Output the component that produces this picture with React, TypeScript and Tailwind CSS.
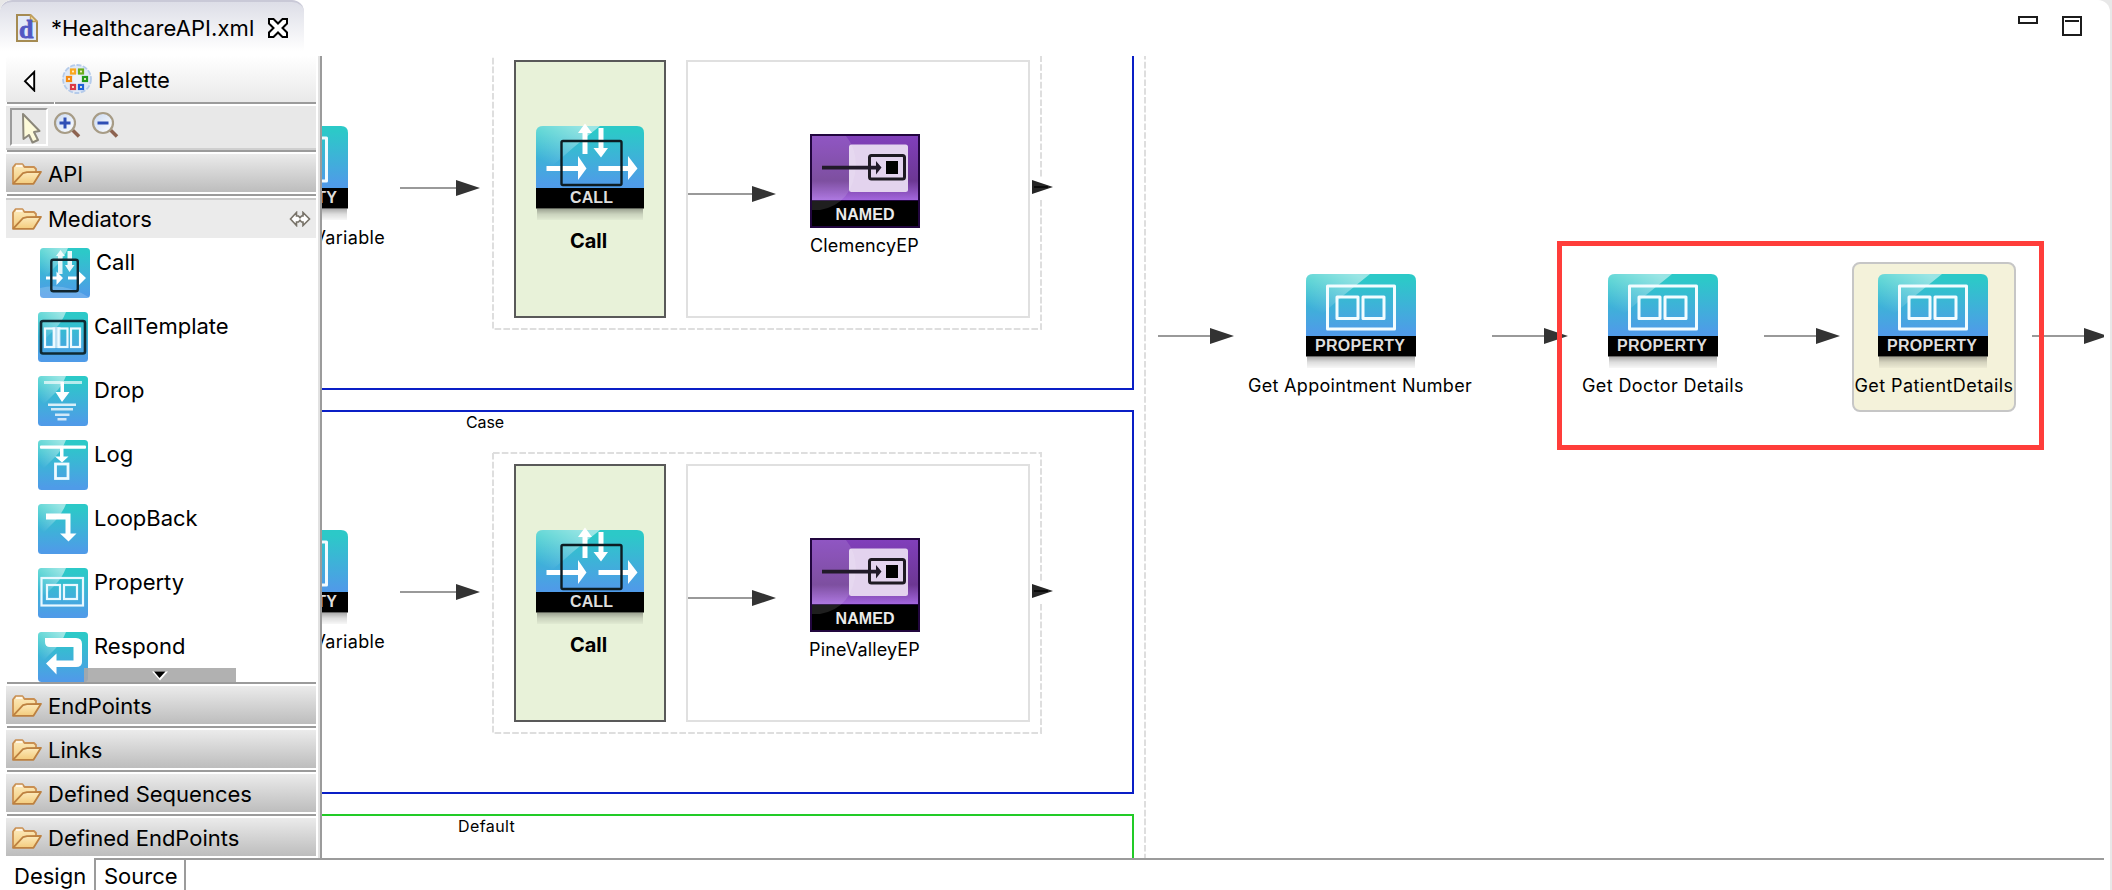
import type { ReactNode } from "react";

/* ---------- shared drawing pieces ---------- */

function Defs() {
  return (
    <svg width="0" height="0" className="absolute">
      <defs>
        <linearGradient id="teal" x1="0" y1="0" x2="0" y2="1">
          <stop offset="0.08" stopColor="#2cc9c8" />
          <stop offset="0.95" stopColor="#4f9be8" />
        </linearGradient>
        <linearGradient id="gloss" x1="0.1" y1="0.9" x2="0.75" y2="0">
          <stop offset="0.1" stopColor="#fff" stopOpacity="0" />
          <stop offset="1" stopColor="#fff" stopOpacity="0.52" />
        </linearGradient>
        <linearGradient id="shade" x1="0" y1="0" x2="0" y2="1">
          <stop offset="0" stopColor="#000" stopOpacity="0.34" />
          <stop offset="0.5" stopColor="#000" stopOpacity="0.13" />
          <stop offset="1" stopColor="#000" stopOpacity="0.03" />
        </linearGradient>
        <linearGradient id="violet" x1="0" y1="0" x2="0" y2="1">
          <stop offset="0" stopColor="#813fbb" />
          <stop offset="0.7" stopColor="#6c3793" />
          <stop offset="1" stopColor="#a366dd" />
        </linearGradient>
        <linearGradient id="folderFill" x1="0" y1="0" x2="0" y2="1">
          <stop offset="0" stopColor="#fdebbd" />
          <stop offset="1" stopColor="#f3cb7c" />
        </linearGradient>
        <linearGradient id="lens" x1="0" y1="0" x2="1" y2="1">
          <stop offset="0" stopColor="#c9d9f2" />
          <stop offset="1" stopColor="#ffffff" />
        </linearGradient>
      </defs>
    </svg>
  );
}

function Badge({ width, label, textX, textW, children }: { width: number; label: string; textX: number; textW: number; children: ReactNode }) {
  return (
    <svg width={width} height="98" viewBox={`0 -4 ${width} 98`} className="block">
      <path d={`M0 62V7Q0 0 7 0H${width - 7}Q${width} 0 ${width} 7V62Z`} fill="url(#teal)" />
      <path d="M0 46V7Q0 0 7 0H64L38 21Q20 37 8 46Z" fill="url(#gloss)" />
      <rect y="62" width={width} height="20.5" fill="#000" />
      <rect y="82.5" x="1" width={width - 2} height="11.5" fill="url(#shade)" />
      {children}
      <text x={textX} y="76.8" textLength={textW} fontSize="16" fontWeight="700" fill="#dedede" fontFamily="Liberation Sans, sans-serif">
        {label}
      </text>
    </svg>
  );
}

function PropertyIcon() {
  return (
    <Badge width={110} label="PROPERTY" textX={9} textW={90}>
      <g fill="none" stroke="#f2fcff" strokeWidth="3" strokeLinejoin="round">
        <rect x="21.5" y="12" width="67" height="43" />
        <rect x="31" y="23" width="21" height="21.5" />
        <rect x="57" y="23" width="21" height="21.5" />
      </g>
    </Badge>
  );
}

function CallIcon() {
  return (
    <Badge width={108} label="CALL" textX={34} textW={43}>
      <g fill="#fff">
        <path d="M46.5 28V7H42L49 -2.5L56 7H51.5V28Z" />
        <path d="M62.5 2H67.5V22H72L65 31.5L57.500 22H62.5Z" />
        <path d="M10.500 40H42V30L50.500 42.500L42 54V45H10.500Z" />
        <path d="M62.500 40H92V30L101.500 42.500L92 54V45H62.500Z" />
      </g>
      <rect x="25.500" y="15" width="60" height="44" rx="1.500" fill="none" stroke="#0d1c22" strokeWidth="2.4" />
    </Badge>
  );
}

function NamedIcon() {
  return (
    <svg width="110" height="94" viewBox="0 0 110 94" className="block">
      <rect width="110" height="94" fill="#22063f" />
      <rect x="2" y="2" width="106" height="64" fill="url(#violet)" />
      <rect x="2" y="67" width="106" height="25" fill="#000" />
      <rect x="39" y="10.500" width="59" height="47.500" rx="2.500" fill="#e3d3ee" />
      <path d="M2 2H36Q46 14 46 32Q43 70 10 76H2Z" fill="#fff" opacity="0.12" />
      <rect x="59.500" y="21.500" width="35" height="23.500" rx="2" fill="none" stroke="#1e1a22" strokeWidth="3" />
      <rect x="76" y="27" width="12" height="13" fill="#000" />
      <path d="M12 31.800H66V27L71.500 33.500L66 40.500V35.500H12Z" fill="#211a29" />
      <text x="25.500" y="85.500" textLength="59" fontSize="16" fontWeight="700" fill="#ebebeb" fontFamily="Liberation Sans, sans-serif">
        NAMED
      </text>
    </svg>
  );
}

function Arrow({ length }: { length: number }) {
  return (
    <svg width={length} height="16" viewBox={`0 0 ${length} 16`} className="block">
      <rect y="7" width={length - 24} height="2" fill="#999" />
      <path d={`M${length - 24} 0L${length} 8L${length - 24} 16Z`} fill="#333" />
    </svg>
  );
}

function StubArrow() {
  return (
    <svg width="22" height="14" viewBox="0 0 22 14" className="block">
      <path d="M0 0L21 7L0 14Z" fill="#262626" />
      <rect x="2" y="6.300" width="14" height="1.400" fill="#000" />
    </svg>
  );
}

/* ---------- palette ---------- */

function FolderIcon() {
  return (
    <svg width="30" height="22" viewBox="0 0 30 22" className="mt-[2px] block flex-none">
      <path d="M1 20.500V4.500L3.500 1.200H10.500L12.500 4H22L24 6V10" fill="url(#folderFill)" stroke="#c98f52" strokeWidth="1.800" strokeLinejoin="round" />
      <path d="M4 1.800H10.500V4H4Z" fill="#fff6e6" />
      <path d="M1 20.800L11 10.200L15 9.200L29 8.800L21.500 20.800Z" fill="url(#folderFill)" stroke="#bd8140" strokeWidth="1.800" strokeLinejoin="round" />
    </svg>
  );
}

function Drawer({ label }: { label: string }) {
  return (
    <div className="flex h-[44px] flex-none flex-col">
      <div className="flex h-[38px] items-center gap-[6px] bg-linear-to-b from-[#ebebeb] to-[#bdbdbd] pl-[6px]">
        <FolderIcon />
        <span className="pt-[2px]">{label}</span>
      </div>
      <div className="mt-[2px] ml-px h-[2px] bg-[#9b9b9b]" />
    </div>
  );
}

function Tile({ children }: { children: ReactNode }) {
  return (
    <svg width="50" height="50" viewBox="0 0 50 50" className="block flex-none">
      <rect width="50" height="50" rx="3.500" fill="url(#teal)" />
      <path d="M0 34V3Q0 0 3 0H28Q24 10 17 17Q9 25 0 34Z" fill="url(#gloss)" />
      {children}
    </svg>
  );
}

const tools: { label: string; icon: ReactNode }[] = [
  {
    label: "CallTemplate",
    icon: (
      <>
        <rect x="14.500" y="15" width="8" height="21" fill="#b9def3" />
        <g fill="none" stroke="#eefaff" strokeWidth="2.200">
          <rect x="7" y="16.500" width="9" height="18.500" />
          <rect x="20.500" y="16.500" width="9" height="18.500" />
          <rect x="33" y="16.500" width="9" height="18.500" />
        </g>
        <rect x="3" y="9" width="44" height="32.500" rx="2" fill="none" stroke="#0f2a33" strokeWidth="2.600" />
      </>
    ),
  },
  {
    label: "Drop",
    icon: (
      <g fill="#fff">
        <rect x="6" y="5" width="38" height="3" opacity="0.65" />
        <path d="M22.500 6H26V16H31.500L24 26L17.500 16H22.500Z" />
        <rect x="10" y="27.500" width="28" height="2.500" opacity="0.8" />
        <rect x="13" y="32" width="22" height="2.500" opacity="0.75" />
        <rect x="17" y="37.500" width="14.500" height="2.500" opacity="0.75" />
        <rect x="19.500" y="42" width="9" height="2.500" opacity="0.75" />
      </g>
    ),
  },
  {
    label: "Log",
    icon: (
      <>
        <rect x="2" y="5.500" width="46" height="3.200" rx="1" fill="#fff" />
        <path d="M22 8H25.500V16.500H30.500L24 22.500L17 16.500H22Z" fill="#fff" />
        <rect x="17.500" y="24" width="12.500" height="14.500" fill="none" stroke="#eefaff" strokeWidth="2.800" />
      </>
    ),
  },
  {
    label: "LoopBack",
    icon: <path d="M8 9.500H32.500V29.500H38.500L30.500 37.500L22 29.500H27.500V15.500H8Z" fill="#fff" />,
  },
  {
    label: "Property",
    icon: (
      <g fill="none" stroke="#e8f8ff" strokeWidth="2.200">
        <rect x="3.500" y="10" width="41.500" height="27.500" />
        <rect x="9" y="17" width="13" height="14" />
        <rect x="26" y="17" width="13" height="14" />
      </g>
    ),
  },
  {
    label: "Respond",
    icon: <path d="M7 6H38Q44 6 44 12V30Q44 35 38 35H18.500V42.500L8 31.500L18.500 21.500V28.500H35.500V15H12Q7 15 7 10Z" fill="#fff" />,
  },
];

function Palette() {
  return (
    <aside className="flex h-[802px] w-[322px] flex-none border-r-2 border-[#9b9b9b] bg-white pl-[6px]">
      <div className="flex w-[310px] flex-none flex-col">
        <header className="flex h-[46px] flex-none items-center bg-linear-to-b from-white to-[#e9e9e9]">
          <svg width="14" height="22" viewBox="0 0 14 22" className="mt-[3px] ml-[17px] block">
            <path d="M11.200 2V20.500L2 11.200Z" fill="#fff" stroke="#000" strokeWidth="1.900" />
          </svg>
          <svg width="30" height="30" viewBox="0 0 30 30" className="ml-[25px] block">
            <circle cx="15" cy="15" r="14" fill="#dfe9f7" stroke="#b5cbea" strokeWidth="1.800" strokeDasharray="5 1.500" />
            <circle cx="15" cy="15" r="5" fill="#edf3fb" />
            <g strokeWidth="2.200" fill="#fff6d8">
              <rect x="9" y="5.500" width="4" height="4" stroke="#f9a71e" />
              <rect x="17" y="5.500" width="4" height="4" stroke="#6aad1c" />
              <rect x="5" y="13" width="4" height="4" stroke="#f58a12" />
              <rect x="21" y="13" width="4" height="4" stroke="#239a1c" />
              <rect x="9" y="21" width="4" height="4" stroke="#da3a48" />
              <rect x="17" y="21" width="4" height="4" stroke="#1f62d8" />
            </g>
          </svg>
          <span className="ml-[6px] pt-[2px] tracking-[0.15px]">Palette</span>
        </header>
        <div className="ml-px flex h-[2px] flex-none gap-px bg-white">
          <div className="w-[47px] bg-[#9b9b9b]" />
          <div className="flex-1 bg-[#9b9b9b]" />
        </div>
        <div className="mt-[2px] flex h-[44px] flex-none items-start border-b-2 border-[#cfcfcf] bg-[#e8e8e8] pt-[2px] pl-[4px]">
          <div className="h-[38px] w-[38px] border-2 border-t-[#9b9b9b] border-r-white border-b-white border-l-[#9b9b9b]">
            <svg width="34" height="34" viewBox="0 0 34 34" className="block">
              <path d="M11 4L27.500 21L22 22L26 30L20.500 32.500L17 25L11.500 29Z" fill="#fdfad9" stroke="#8b877a" strokeWidth="2" strokeLinejoin="round" />
            </svg>
          </div>
          <ZoomGlyph plus />
          <ZoomGlyph />
        </div>
        <div className="ml-px h-[2px] flex-none bg-[#9b9b9b]" />
        <div className="mt-[2px]">
          <Drawer label="API" />
        </div>
        <div className="flex h-[40px] flex-none items-center gap-[6px] border-t-2 border-[#cbcbcb] bg-[#ebebeb] pb-[3px] pl-[6px]">
          <FolderIcon />
          <span className="pt-[2px]">Mediators</span>
          <svg width="22" height="16" viewBox="0 0 22 16" className="mt-[3px] mr-[5px] ml-auto block">
            <path d="M1.500 8L7.500 1.500V5H9.500L11 6.800L12.500 5H14V1.500L20.500 8L14 14.500V11H12.500L11 9.300L9.500 11H7.500V14.500Z" fill="#fff" stroke="#777268" strokeWidth="1.600" />
          </svg>
        </div>
        <div className="relative h-[444px] flex-none overflow-hidden pt-[10px]">
          <div className="flex flex-col gap-[14px] pl-[32px]">
            <div className="flex h-[50px] flex-none gap-[6px] pl-[2px]">
              <Tile>
                <path d="M0 40Q25 34 50 50H0Z" fill="#fff" opacity="0.18" />
                <g fill="#fff">
                  <path d="M18 26V8H16L20.500 2L25 8H22.500V26Z" opacity="0.85" />
                  <path d="M27.500 3H32V17H34.500L29.500 24L25 17H27.500Z" opacity="0.9" />
                  <path d="M6 28.500H16.500V23.500L23 30L16.500 37V31.500H6Z" />
                  <path d="M28 28.500H39V23.500L46 30L39 37V31.500H28Z" />
                </g>
                <rect x="11.300" y="11.800" width="26.500" height="31.500" rx="2" fill="none" stroke="#10252e" strokeWidth="2.400" />
              </Tile>
              <span className="leading-[28px]">Call</span>
            </div>
            {tools.map((t) => (
              <div key={t.label} className="flex h-[50px] flex-none gap-[6px]">
                <Tile>{t.icon}</Tile>
                <span className="leading-[28px]">{t.label}</span>
              </div>
            ))}
          </div>
          <div className="absolute bottom-0 left-[78px] flex h-[14px] w-[152px] justify-center bg-[#a8a8a8]/90">
            <svg width="16" height="10" viewBox="0 0 16 10" className="mt-[3px] block">
              <path d="M0 0.500H16L8 9.500Z" fill="#fff" />
              <path d="M2 0.500H13.500L7.500 7Z" fill="#000" />
            </svg>
          </div>
        </div>
        <div className="ml-px h-[2px] flex-none bg-[#9b9b9b]" />
        <div className="mt-[2px] flex h-[170px] flex-none flex-col overflow-hidden">
          <Drawer label="EndPoints" />
          <Drawer label="Links" />
          <Drawer label="Defined Sequences" />
          <Drawer label="Defined EndPoints" />
        </div>
      </div>
      <div className="ml-[2px] w-[2px] bg-[#e2e2e2]" />
    </aside>
  );
}

function ZoomGlyph({ plus = false }: { plus?: boolean }) {
  return (
    <svg width="28" height="28" viewBox="0 0 28 28" className="mt-[3px] ml-[5px] mr-[5px] block">
      <path d="M18.500 18L26 25.500" stroke="#8d6350" strokeWidth="3.600" />
      <circle cx="12" cy="12" r="10" fill="url(#lens)" stroke="#a79c86" strokeWidth="2.200" />
      <path d={plus ? "M6.500 12H17.500M12 6.500V17.500" : "M6.500 12H17.500"} stroke="#2f4fb5" strokeWidth="3" />
    </svg>
  );
}

/* ---------- canvas ---------- */

function CaseBranch({ endpoint, top, title }: { endpoint: string; top: string; title?: string }) {
  return (
    <section className={`absolute left-0 h-[384px] w-[812px] border-y-2 border-r-2 border-[#0a1fc6] ${top}`}>
      <div className="absolute -top-[2px] left-0 h-[384px] w-[812px]">
        <svg width="812" height="384" className="absolute top-0 left-0">
          <g fill="none" stroke="#dedede" strokeWidth="2" strokeDasharray="6.600 2.200">
            <path d="M171 43V323H719V192" />
            <path d="M171 43H719V171" />
          </g>
          <rect x="193" y="55" width="150" height="256" fill="#e8f2d9" stroke="#595959" strokeWidth="2" />
          <rect x="365" y="55" width="342" height="256" fill="#fff" stroke="#e0e0e0" strokeWidth="2" />
        </svg>
        {title && <div className="absolute top-[3px] left-[144px] text-[16px] leading-[18px] tracking-[-0.1px]">{title}</div>}
        <div className="absolute top-[116px] -left-[84px]"><PropertyIcon /></div>
        <div className="absolute top-[222px] right-[749px] text-[18px] leading-[20px] tracking-[0.32px]">Variable</div>
        <div className="absolute top-[174px] left-[78px]"><Arrow length={80} /></div>
        <div className="absolute top-[116px] left-[214px]"><CallIcon /></div>
        <div className="absolute top-[224px] left-[192px] w-[149px] text-center text-[20px] leading-[22px] font-bold">Call</div>
        <div className="absolute top-[180px] left-[366px]"><Arrow length={88} /></div>
        <div className="absolute top-[128px] left-[488px]"><NamedIcon /></div>
        <div className="absolute top-[230px] left-[443px] w-[199px] text-center text-[18px] leading-[20px] tracking-[0.15px]">{endpoint}</div>
        <div className="absolute top-[174px] left-[710px]"><StubArrow /></div>
      </div>
    </section>
  );
}

function Canvas() {
  return (
    <main className="relative h-[802px] w-[1782px] overflow-hidden bg-white">
      <CaseBranch endpoint="ClemencyEP" top="top-[-50px]" />
      <CaseBranch endpoint="PineValleyEP" top="top-[354px]" title="Case" />
      <section className="absolute top-[758px] left-0 h-[100px] w-[812px] border-t-2 border-r-2 border-[#22cb27]">
        <div className="absolute top-0 left-[136px] text-[16px] leading-[20px] tracking-[0.4px]">Default</div>
      </section>
      <svg width="2" height="802" className="absolute top-0 left-[822px]">
        <path d="M1 -3V802" stroke="#dedede" strokeWidth="2" strokeDasharray="6.600 2.200" />
      </svg>
      <div className="absolute top-[206px] left-[1530px] h-[150px] w-[164px] rounded-[8px] border-2 border-[#c6c6c6] bg-[#f4f2da]" />
      <div className="absolute top-[272px] left-[836px]"><Arrow length={76} /></div>
      <div className="absolute top-[214px] left-[984px]"><PropertyIcon /></div>
      <div className="absolute top-[320px] left-[888px] w-[300px] text-center text-[18px] leading-[20px] tracking-[0.32px]">Get Appointment Number</div>
      <div className="absolute top-[272px] left-[1170px]"><Arrow length={76} /></div>
      <div className="absolute top-[214px] left-[1286px]"><PropertyIcon /></div>
      <div className="absolute top-[320px] left-[1191px] w-[300px] text-center text-[18px] leading-[20px] tracking-[0.38px]">Get Doctor Details</div>
      <div className="absolute top-[272px] left-[1442px]"><Arrow length={76} /></div>
      <div className="absolute top-[214px] left-[1556px]"><PropertyIcon /></div>
      <div className="absolute top-[320px] left-[1462px] w-[300px] text-center text-[18px] leading-[20px] tracking-[0.42px]">Get PatientDetails</div>
      <div className="absolute top-[272px] left-[1710px]"><Arrow length={76} /></div>
      <div className="absolute top-[185px] left-[1235px] h-[209px] w-[487px] border-[5px] border-[#ff3d3a]" />
    </main>
  );
}

/* ---------- window ---------- */

function EditorTabs() {
  return (
    <div className="flex h-[56px] flex-none items-start justify-between">
      <div className="flex h-[51px] w-[304px] items-center rounded-t-[12px] border-t-2 border-[#c9c9d7] bg-linear-to-b from-[#dddee7] to-white pt-[3px] pl-[16px]">
        <svg width="22" height="28" viewBox="0 0 22 28" className="block flex-none">
          <path d="M1 1H14.500L21 7.500V27H1Z" fill="#e3eaf8" stroke="#a58b52" strokeWidth="2" />
          <path d="M14.500 1V7.500H21Z" fill="#f3dca4" stroke="#c3a15c" strokeWidth="1.400" />
          <text x="3" y="24" fontSize="26" fontWeight="700" fill="#5257c4" stroke="#5257c4" strokeWidth="0.800" fontFamily="Liberation Serif, serif">d</text>
        </svg>
        <span className="ml-[13px] tracking-[0.08px]">*HealthcareAPI.xml</span>
        <svg width="20" height="20" viewBox="0 0 20 20" className="ml-[14px] block flex-none">
          <path d="M1 1H5.500L10 5.500L14.500 1H19V5.500L14.500 10L19 14.500V19H14.500L10 14.500L5.500 19H1V14.500L5.500 10L1 5.500Z" fill="#fff" stroke="#000" strokeWidth="2" />
        </svg>
      </div>
      <div className="flex items-start gap-[24px] pt-[16px] pr-[28px]">
        <div className="h-[8px] w-[20px] border-2 border-[#1c1c1c]" />
        <div className="h-[20px] w-[20px] border-2 border-[#1c1c1c] px-[1px] pt-[2px]">
          <div className="h-[2px] bg-[#1c1c1c]" />
        </div>
      </div>
    </div>
  );
}

export default function App() {
  return (
    <div className="h-[890px] w-[2112px] overflow-hidden bg-[#e8e8e8] font-['Inter',sans-serif] text-[22px] leading-[28px] text-black">
      <Defs />
      <div className="flex h-[890px] w-[2110px] flex-col overflow-hidden rounded-t-[12px] bg-white">
        <EditorTabs />
        <div className="flex h-[802px] flex-none">
          <Palette />
          <Canvas />
        </div>
        <div className="flex h-[32px] w-[2104px] flex-none">
          <div className="w-[94px] pt-[4px] pl-[14px]">Design</div>
          <div className="w-[92px] border-t-2 border-r-2 border-l-2 border-[#9b9b9b] pt-[2px] pl-[8px]">Source</div>
          <div className="flex-1 border-t-2 border-[#9b9b9b]" />
        </div>
      </div>
    </div>
  );
}
